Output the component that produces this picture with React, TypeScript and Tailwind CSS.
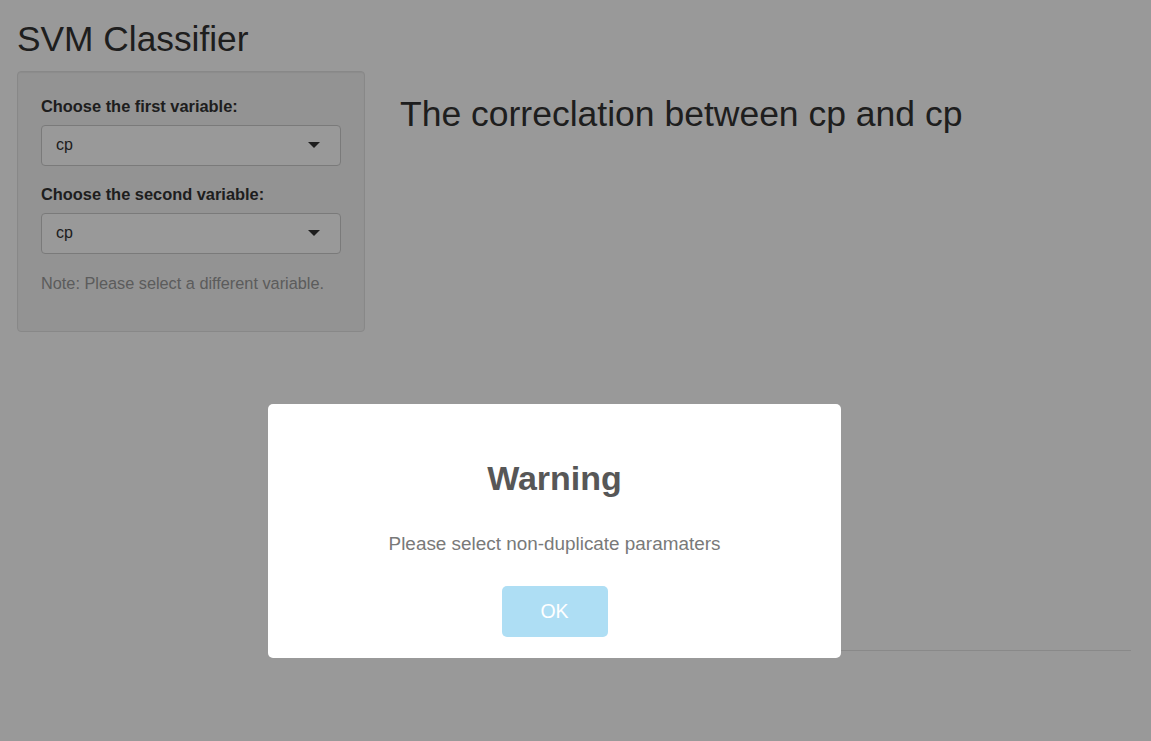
import { FC } from "react";

interface SelectProps {
  value: string;
}

const FakeSelect: FC<SelectProps> = ({ value }) => {
  return (
    <div className="flex h-[41px] w-full items-center justify-between rounded-[4px] border border-[#cccccc] bg-white pl-[14px] pr-[20px] text-[16px] text-[#333333]">
      <span>{value}</span>
      <span className="h-0 w-0 border-x-[6px] border-t-[6px] border-x-transparent border-t-[#333333]"></span>
    </div>
  );
};

const App: FC = () => {
  return (
    <div className="relative min-h-screen bg-white font-['Liberation_Sans',Arial,sans-serif] text-[#333333]">
      <div className="pl-[17px] pr-[20px]">
        <h2 className="pt-[20px] text-[35.3px] leading-[38.5px]">SVM Classifier</h2>

        <div className="mt-[12.5px] flex">
          {/* sidebar */}
          <div className="w-[348px] shrink-0">
            <div className="rounded-[4px] border border-[#e3e3e3] bg-[#f5f5f5] px-[23px] pb-[37px] pt-[23px] shadow-[inset_0_1px_1px_rgba(0,0,0,0.05)]">
              <label className="block text-[16.4px] font-bold leading-[22px]">
                Choose the first variable:
              </label>
              <div className="mt-[7.5px]">
                <FakeSelect value="cp" />
              </div>

              <label className="mt-[17.5px] block text-[16.4px] font-bold leading-[22px]">
                Choose the second variable:
              </label>
              <div className="mt-[7.5px]">
                <FakeSelect value="cp" />
              </div>

              <p className="mt-[18.5px] text-[16.3px] leading-[22px] text-[#999999]">
                Note: Please select a different variable.
              </p>
            </div>
          </div>

          {/* main panel */}
          <div className="ml-[35px] flex-1">
            <h1 className="mt-[24px] text-[35.5px] leading-[38.5px]">
              The correclation between cp and cp
            </h1>
            <div className="h-[516px]"></div>
            <div className="border-t border-[#e5e5e5]"></div>
          </div>
        </div>
      </div>

      {/* sweetalert overlay */}
      <div className="fixed inset-0 bg-black/40"></div>
      <div className="absolute left-[268px] top-[404px] flex h-[254px] w-[573px] flex-col items-center rounded-[5px] bg-white pt-[54px]">
        <h2 className="text-[34px] font-bold leading-[40px] text-[#575757]">Warning</h2>
        <p className="mt-[34px] text-[18.9px] leading-[24px] text-[#797979]">
          Please select non-duplicate paramaters
        </p>
        <button className="mt-[30px] h-[51px] w-[106px] rounded-[5px] bg-[#aedef4] text-[19.5px] text-white">
          OK
        </button>
      </div>
    </div>
  );
};

export default App;
